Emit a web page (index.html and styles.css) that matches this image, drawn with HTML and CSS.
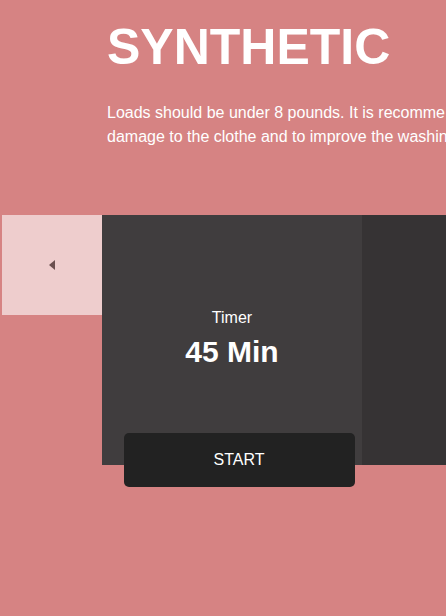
FILE: index.html
```html
<!DOCTYPE html>
<html lang="en">
<head>
<meta charset="utf-8">
<meta name="viewport" content="width=device-width, initial-scale=1">
<title>Synthetic</title>
<link rel="stylesheet" href="styles.css">
</head>
<body>
<main class="program">
  <header class="intro">
    <h1 class="title">SYNTHETIC</h1>
    <p class="description">Loads should be under 8 pounds. It is recomme<br>damage to the clothe and to improve the washin</p>
  </header>
  <section class="controls">
    <button class="previous" type="button" aria-label="Previous program">
      <svg class="arrow" viewBox="0 0 6 10" aria-hidden="true"><path d="M6 0v10L0 5z"/></svg>
    </button>
    <div class="timer">
      <div class="reading">
        <span class="label">Timer</span>
        <strong class="value">45 Min</strong>
      </div>
      <button class="start" type="button">START</button>
    </div>
    <div class="next-panel"></div>
  </section>
</main>
</body>
</html>
```

FILE: styles.css
```css
* {
  box-sizing: border-box;
}

body {
  margin: 0;
  min-height: 100vh;
  background: #d68383;
  color: #fff;
  font: 16px/24px "Liberation Sans", Arial, sans-serif;
}

button {
  border: 0;
  font: inherit;
  cursor: pointer;
}

.program {
  overflow: hidden;
  padding-bottom: 24px;
}

.intro {
  padding: 17px 0 66px 107px;
}

.title {
  margin: 0 0 24px;
  font-size: 50px;
  line-height: 60px;
}

.description {
  margin: 0;
  white-space: nowrap;
}

.controls {
  display: flex;
  align-items: flex-start;
  padding-left: 2px;
}

.previous {
  display: flex;
  flex: none;
  align-items: center;
  justify-content: center;
  width: 100px;
  height: 100px;
  padding: 0;
  background: #eecdcd;
}

.arrow {
  width: 6px;
  height: 10px;
  fill: #6b4f4f;
}

.timer {
  display: flex;
  flex: none;
  flex-direction: column;
  align-items: center;
  justify-content: space-between;
  width: 260px;
  height: 250px;
  padding-top: 91px;
  background: #403d3e;
}

.reading {
  display: flex;
  flex-direction: column;
  align-items: center;
}

.value {
  font-size: 30px;
  line-height: 44px;
}

.start {
  width: 231px;
  height: 54px;
  margin-bottom: -22px;
  margin-left: 14px;
  border-radius: 5px;
  background: #222;
  color: #fff;
}

.next-panel {
  flex: 1;
  align-self: stretch;
  background: #363334;
}
```
